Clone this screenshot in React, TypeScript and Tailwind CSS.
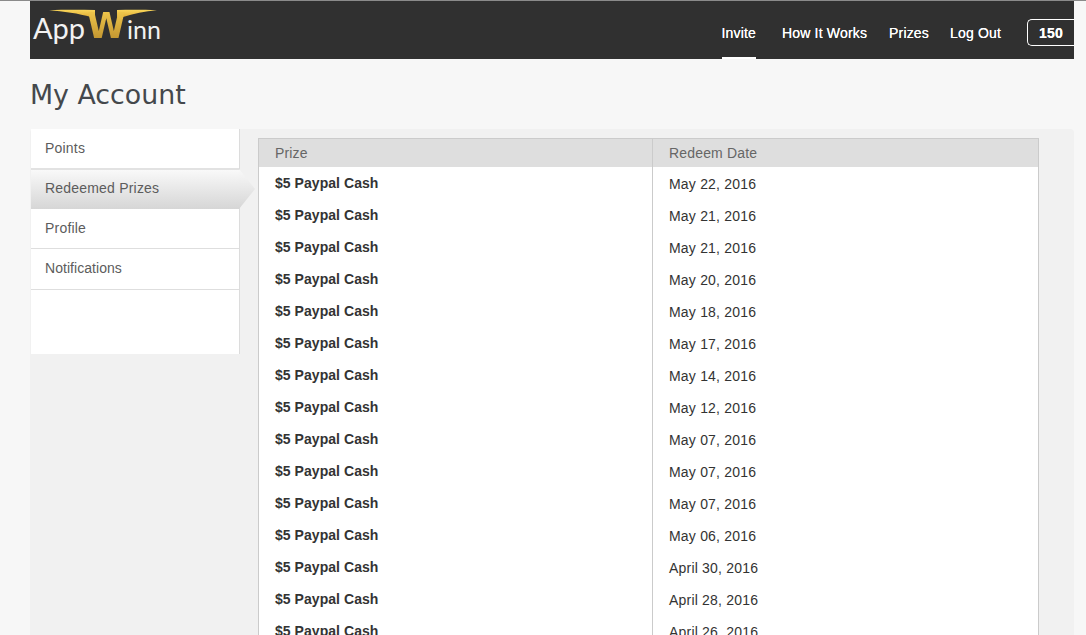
const rows = [
  "May 22, 2016","May 21, 2016","May 21, 2016","May 20, 2016","May 18, 2016","May 17, 2016","May 14, 2016","May 12, 2016","May 07, 2016","May 07, 2016","May 07, 2016","May 06, 2016","April 30, 2016","April 28, 2016","April 26, 2016",
];

function Logo() {
  return (
    <div className="relative h-[58px] w-[140px] shrink-0">
      <svg className="absolute left-[19px] top-[8px]" width="108" height="12" viewBox="0 0 108 12">
        <defs>
          <linearGradient id="sw" x1="0" y1="0" x2="0" y2="1">
            <stop offset="0" stopColor="#f9d65a" />
            <stop offset="1" stopColor="#e0ae36" />
          </linearGradient>
        </defs>
        <path d="M0 1.2 C14 0.6 30 0.6 46 1 L46 8 L42 8 C30 4.5 14 2.2 0 1.2 Z" fill="url(#sw)" />
        <path d="M108 1.2 C94 0.6 80 0.6 68 1 L68 8 L74 8 C84 4.5 96 2.2 108 1.2 Z" fill="url(#sw)" />
      </svg>
      <span className="absolute left-[3px] top-[9px] font-['Lato',sans-serif] text-[29px] leading-[36px] font-normal text-[#f2f2f2]">App</span>
      <span className="absolute left-[57px] top-[5px] bg-gradient-to-b from-[#f7d050] to-[#b88a2a] bg-clip-text font-['DejaVu_Sans',sans-serif] text-[35px] leading-[40px] font-bold text-transparent">W</span>
      <span className="absolute left-[97px] top-[10px] font-['Lato',sans-serif] text-[25px] leading-[36px] font-normal text-[#f2f2f2]">inn</span>
    </div>
  );
}

function NavLink({ label, active }: { label: string; active?: boolean }) {
  return (
    <a className={`flex h-[58px] items-center border-b-2 pt-[8px] ${active ? "border-white" : "border-transparent"}`}>
      {label}
    </a>
  );
}

export default function App() {
  return (
    <div className="h-[635px] overflow-hidden bg-[#f7f7f7] font-['Liberation_Sans',Arial,sans-serif]">
      <div className="h-px bg-[#8a8a8a]" />
      <div className="mr-[12px] ml-[30px] flex h-[58px] bg-[#303030]">
        <Logo />
        <nav className="ml-auto flex items-start text-[14px] font-normal tracking-[0.17px] text-white [text-shadow:0_0_0.4px_#fff]">
          <div className="flex gap-[21px]">
            <div className="mr-[5px]"><NavLink label="Invite" active /></div>
            <div className="mr-px"><NavLink label="How It Works" /></div>
            <NavLink label="Prizes" />
            <NavLink label="Log Out" />
          </div>
          <div className="ml-[26px] mt-[18px] flex h-[27px] w-[47px] items-center rounded-l-[5px] border border-r-0 border-white pl-[11px] pt-[2px] text-[14px] font-bold">
            150
          </div>
        </nav>
      </div>
      <h1 className="ml-[30px] mt-[16px] h-[54px] font-['DejaVu_Sans',Verdana,sans-serif] text-[26.8px] leading-[40px] font-normal text-[#44484c]">
        My Account
      </h1>
      <div className="mr-[12px] ml-[30px] flex h-[506px] rounded-t-[4px] bg-[#f1f1f1] pl-px">
        <aside className="relative h-[225px] w-[209px] shrink-0 border-r border-[#dcdcdc] bg-white text-[14px] tracking-[0.2px] text-[#5c5c5c]">
          <div className="flex h-[39px] items-center pl-[14px]">Points</div>
          <div className="relative flex h-[41px] w-[208px] items-center border-t-2 border-[#e2e2e2] bg-gradient-to-b from-[#f9f9f9] to-[#d6d6d6] pb-[2px] pl-[14px]">
            Redeemed Prizes
            <svg className="absolute -right-[17px] -top-[1px]" width="17" height="40" viewBox="0 0 17 40">
              <defs>
                <linearGradient id="ar" x1="0" y1="0" x2="0" y2="1">
                  <stop offset="0" stopColor="#f9f9f9" />
                  <stop offset="1" stopColor="#d6d6d6" />
                </linearGradient>
              </defs>
              <path d="M0 0 L16 20 L0 40 Z" fill="url(#ar)" />
            </svg>
          </div>
          <div className="flex h-[39px] items-center pl-[14px]">Profile</div>
          <div className="flex h-[42px] items-center border-y border-[#dedede] pb-[2px] pl-[14px] tracking-[0.05px]">Notifications</div>
        </aside>
        <div className="ml-[18px] mt-[9px] w-[781px]">
          <div className="border-x border-t border-[#cbcbcb] bg-white">
            <div className="flex h-[28px] items-center bg-[#dedede] text-[14px] tracking-[0.17px] text-[#666]">
              <div className="flex h-full w-[394px] items-center border-r border-[#cbcbcb] pl-[16px]">Prize</div>
              <div className="pl-[16px]">Redeem Date</div>
            </div>
            {rows.map((d, i) => (
              <div key={i} className="flex h-[32px] text-[14px] leading-[32px] text-[#333]">
                <div className="h-full w-[394px] border-r border-[#cbcbcb] pl-[16px] font-bold tracking-[0.05px]">$5 Paypal Cash</div>
                <div className="pl-[16px] pt-px tracking-[0.2px]">{d}</div>
              </div>
            ))}
          </div>
        </div>
      </div>
    </div>
  );
}
